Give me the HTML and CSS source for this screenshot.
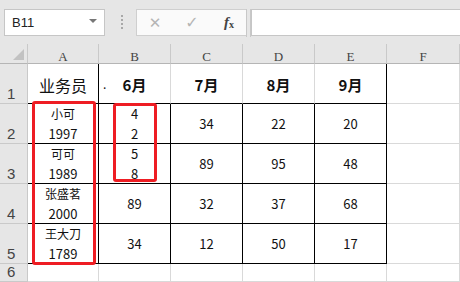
FILE: index.html
```html
<!DOCTYPE html>
<html lang="zh-CN">
<head>
    <meta charset="UTF-8">
    <title>Sheet</title>
    <link rel="stylesheet" href="styles.css">
</head>
<body>
    <div class="formula-bar">
        <div class="name-box">
            <span>B11</span>
            <span class="drop"></span>
        </div>
        <div class="grip"></div>
        <div class="fx-buttons">
            <span class="btn cancel">✕</span>
            <span class="btn ok">✓</span>
            <span class="btn fx"><i>f</i><sub>x</sub></span>
        </div>
        <div class="split"></div>
        <div class="formula-input"></div>
    </div>

    <div class="sheet">
        <div class="hd corner"><span class="tri"></span></div>
        <div class="hd col">A</div>
        <div class="hd col">B</div>
        <div class="hd col">C</div>
        <div class="hd col">D</div>
        <div class="hd col">E</div>
        <div class="hd col">F</div>

        <div class="hd row">1</div>
        <div class="cell bb br title">业务员</div>
        <div class="cell bb month"><span class="dot">.</span>6月</div>
        <div class="cell bb month">7月</div>
        <div class="cell bb month">8月</div>
        <div class="cell bb br month">9月</div>
        <div class="cell"></div>

        <div class="hd row">2</div>
        <div class="cell bb br two"><span class="cn">小可</span><span>1997</span></div>
        <div class="cell bb br two"><span>4</span><span>2</span></div>
        <div class="cell bb br">34</div>
        <div class="cell bb br">22</div>
        <div class="cell bb br">20</div>
        <div class="cell"></div>

        <div class="hd row">3</div>
        <div class="cell bb br two"><span class="cn">可可</span><span>1989</span></div>
        <div class="cell bb br two"><span>5</span><span>8</span></div>
        <div class="cell bb br">89</div>
        <div class="cell bb br">95</div>
        <div class="cell bb br">48</div>
        <div class="cell"></div>

        <div class="hd row">4</div>
        <div class="cell bb br two"><span class="cn">张盛茗</span><span>2000</span></div>
        <div class="cell bb br">89</div>
        <div class="cell bb br">32</div>
        <div class="cell bb br">37</div>
        <div class="cell bb br">68</div>
        <div class="cell"></div>

        <div class="hd row">5</div>
        <div class="cell bb br two"><span class="cn">王大刀</span><span>1789</span></div>
        <div class="cell bb br">34</div>
        <div class="cell bb br">12</div>
        <div class="cell bb br">50</div>
        <div class="cell bb br">17</div>
        <div class="cell"></div>

        <div class="hd row">6</div>
        <div class="cell"></div>
        <div class="cell"></div>
        <div class="cell"></div>
        <div class="cell"></div>
        <div class="cell"></div>
        <div class="cell"></div>

        <div class="mark mark-a"></div>
        <div class="mark mark-b"></div>
    </div>
</body>
</html>
```

FILE: styles.css
```css
* {
    box-sizing: border-box;
}

body {
    margin: 0;
    width: 460px;
    height: 282px;
    overflow: hidden;
    background: #fff;
    font-family: "Noto Sans CJK SC", "Noto Sans", sans-serif;
    color: #000;
}

/* formula bar */
.formula-bar {
    height: 44px;
    background: #e6e6e6;
    display: flex;
    align-items: flex-start;
    padding: 9px 0 0 4px;
}

.name-box {
    width: 101px;
    height: 27px;
    background: #fff;
    border: 1px solid #c6c6c6;
    display: flex;
    align-items: center;
    justify-content: space-between;
    padding: 0 7px 0 7px;
    font-family: "Liberation Sans", sans-serif;
    font-size: 13px;
    color: #222;
}

.drop {
    width: 0;
    height: 0;
    border-left: 4px solid transparent;
    border-right: 4px solid transparent;
    border-top: 4px solid #777;
    margin-top: -3px;
}

.grip {
    width: 2px;
    height: 16px;
    margin: 6px 13px 0 16px;
    background: repeating-linear-gradient(to bottom, #a8a8a8 0 2px, transparent 2px 4px);
}

.fx-buttons {
    width: 110px;
    height: 27px;
    background: #fafafa;
    border: 1px solid #cfcfcf;
    border-right: none;
    display: flex;
    align-items: center;
    gap: 17px;
    padding-left: 8px;
}

.btn {
    flex: 0 0 20px;
    text-align: center;
    font-size: 15px;
    color: #b5b5b5;
    font-family: "DejaVu Sans", sans-serif;
}

.btn.ok {
    font-size: 16px;
}

.btn.fx {
    color: #444;
    font-family: "Liberation Serif", serif;
    font-size: 15px;
    font-weight: bold;
}

.btn.fx sub {
    font-size: 10px;
    vertical-align: -1px;
}

.split {
    width: 5px;
    height: 28px;
    border-left: 1px solid #c8c8c8;
    border-right: 1px solid #c8c8c8;
    background: #e6e6e6;
}

.formula-input {
    flex: 1;
    height: 27px;
    background: #fff;
    border: 1px solid #c6c6c6;
    border-right: none;
}

/* sheet grid */
.sheet {
    position: relative;
    display: grid;
    grid-template-columns: 28px 71px 72px 72px 72px 72px 1fr;
    grid-template-rows: 20px 40px 40px 40px 40px 40px 18px;
}

.hd {
    background: #e6e6e6;
    border-right: 1px solid #c9c9c9;
    border-bottom: 1px solid #c9c9c9;
    color: #444;
}

.corner {
    position: relative;
    border-bottom-color: #b5b5b5;
}

.tri {
    position: absolute;
    right: 3px;
    bottom: 3px;
    width: 0;
    height: 0;
    border-left: 11px solid transparent;
    border-bottom: 11px solid #c2c2c2;
}

.col {
    display: flex;
    justify-content: center;
    align-items: center;
    padding-top: 6px;
    font-family: "Liberation Serif", serif;
    font-size: 13px;
    border-bottom-color: #b5b5b5;
}

.row {
    display: flex;
    align-items: flex-end;
    padding: 0 0 0 7px;
    font-family: "Liberation Sans", sans-serif;
    font-size: 15px;
    line-height: 18px;
}

.cell {
    border-right: 1px solid #d9d9d9;
    border-bottom: 1px solid #d9d9d9;
    display: flex;
    flex-direction: column;
    justify-content: center;
    align-items: center;
    font-size: 13px;
    line-height: 20px;
    color: #111;
}

.cell.bb {
    border-bottom-color: #000;
}

.cell.br {
    border-right-color: #000;
}

.title {
    font-size: 16px;
    padding-top: 2px;
}

.month {
    position: relative;
    font-size: 15px;
    font-weight: bold;
    padding-top: 2px;
}

.dot {
    position: absolute;
    left: 4px;
    top: 10px;
    font-size: 12px;
    font-weight: normal;
}

.two {
    padding-top: 1px;
}

.two .cn {
    font-size: 12px;
}

/* red highlight boxes */
.mark {
    position: absolute;
    border: 3px solid #ee1d23;
    border-radius: 3px;
}

.mark-a {
    left: 32px;
    top: 57px;
    width: 64px;
    height: 164px;
}

.mark-b {
    left: 113px;
    top: 59px;
    width: 44px;
    height: 79px;
}
```
